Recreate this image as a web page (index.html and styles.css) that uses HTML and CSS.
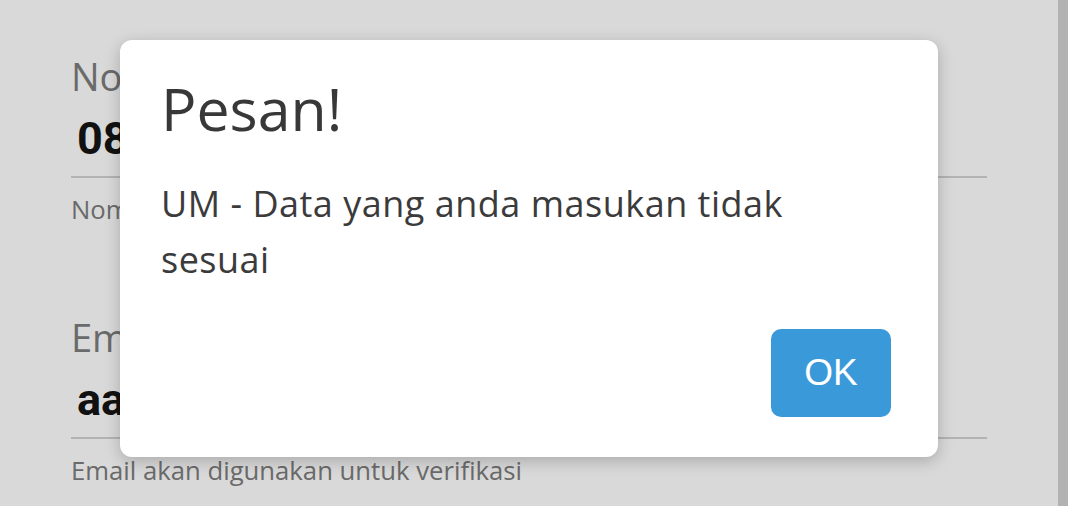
FILE: index.html
```html
<!DOCTYPE html>
<html lang="id">
<head>
<meta charset="utf-8">
<title>Pesan</title>
<link rel="stylesheet" href="styles.css">
</head>
<body>
<div class="page">
  <main class="form">
    <div class="field">
      <div class="label">No. Handphone</div>
      <div class="value">081234567890</div>
      <div class="helper">Nomor handphone digunakan untuk login</div>
    </div>
    <div class="field">
      <div class="label">Email</div>
      <div class="value">aaa@gmail.com</div>
      <div class="helper">Email akan digunakan untuk verifikasi</div>
    </div>
  </main>
  <div class="strip"></div>
</div>
<div class="dialog">
  <h1 class="title">Pesan!</h1>
  <p class="message">UM - Data yang anda masukan tidak sesuai</p>
  <div class="actions">
    <button class="ok">OK</button>
  </div>
</div>
</body>
</html>
```
FILE: styles.css
```css
html, body {
  margin: 0;
  padding: 0;
  height: 100%;
  overflow: hidden;
}
body {
  background: #d9d9d9;
  font-family: "Open Sans", "Noto Sans", sans-serif;
}
.page {
  display: flex;
  height: 506px;
}
.form {
  flex: 1;
  padding: 53px 71px 0 71px;
}
.strip {
  width: 10px;
  background: #b2b2b2;
}
.field {
  margin-bottom: 87px;
}
.label {
  font-size: 38px;
  line-height: 46px;
  color: #6a6a6a;
  margin-bottom: 13px;
}
.value {
  font-family: Roboto, "Liberation Sans", sans-serif;
  font-weight: 700;
  font-size: 45px;
  line-height: 54px;
  color: #111;
  padding-left: 6px;
  padding-bottom: 10px;
  border-bottom: 2px solid #b3b3b3;
}
.helper {
  margin-top: 15px;
  font-size: 25.7px;
  line-height: 34px;
  color: #6a6a6a;
}
.dialog {
  position: absolute;
  left: 120px;
  top: 40px;
  width: 818px;
  height: 417px;
  box-sizing: border-box;
  padding: 32px 47px 40px 41px;
  background: #fff;
  border-radius: 12px;
  box-shadow: 0 4px 16px rgba(0, 0, 0, 0.22);
  display: flex;
  flex-direction: column;
}
.title {
  margin: 0;
  font-weight: 400;
  font-size: 59px;
  line-height: 72px;
  color: #383838;
}
.message {
  margin: 32px 0 0 0;
  font-size: 36px;
  letter-spacing: 0.5px;
  line-height: 56px;
  color: #3b3b3b;
  max-width: 680px;
}
.actions {
  margin-top: auto;
  display: flex;
  justify-content: flex-end;
}
.ok {
  width: 120px;
  height: 88px;
  border: none;
  border-radius: 10px;
  background: #3a9ad9;
  color: #fff;
  font-family: "Liberation Sans", Arial, sans-serif;
  font-size: 37px;
  padding: 0;
}
```
